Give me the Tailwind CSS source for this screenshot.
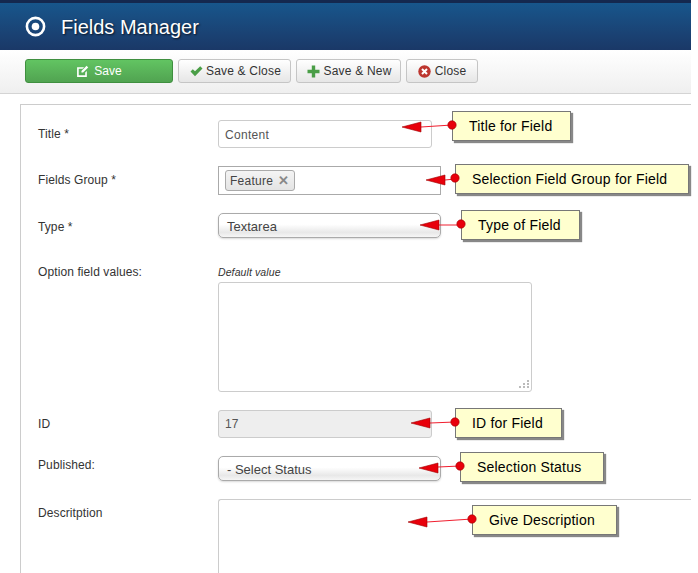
<!DOCTYPE html>
<html lang="en">
<head>
    <meta charset="UTF-8">
    <title>Fields Manager</title>
    <script src="https://cdn.jsdelivr.net/npm/@tailwindcss/browser@4"></script>
</head>
<body class="bg-white font-['Liberation_Sans',Arial,sans-serif] text-[12px] tracking-[0.1px] text-[#333]">
<div class="relative w-[698px] h-[573px] overflow-hidden">
    <div class="w-[691px]">
        <!-- Header -->
        <div class="h-[50px] border-t-[3px] border-[#14284f] bg-gradient-to-b from-[#17568c] to-[#1a3867] flex items-center pl-[25px] gap-[15px]">
            <svg class="w-[21px] h-[21px]" viewBox="0 0 21 21"><circle cx="10.5" cy="10.5" r="8.6" fill="none" stroke="#fff" stroke-width="2.6"/><circle cx="10.5" cy="10.5" r="3.8" fill="#fff"/></svg>
            <h1 class="text-[20px] tracking-normal text-white [text-shadow:1px_1px_2px_rgba(0,0,0,.7)]">Fields Manager</h1>
        </div>

        <!-- Toolbar -->
        <div class="h-[44px] bg-gradient-to-b from-white to-[#efefef] border-b border-[#d4d4d4] flex items-start pt-[9px] pl-[25px] gap-[5px]">
            <button class="w-[148px] h-[24px] rounded-[3px] border border-[#3f8f3f] bg-gradient-to-b from-[#62c462] to-[#51a351] text-white flex items-center justify-center gap-[5px] tracking-normal">
                <svg class="w-[13px] h-[13px]" viewBox="0 0 12 12"><path d="M1 2h6.500L6 3.500H2.500v6h6V7L10 5.500V11H1z" fill="#fff"/><path d="M5 5.500 9.800.7l1.500 1.500L6.500 7H5z" fill="#fff"/></svg>
                Save
            </button>
            <button class="w-[113px] h-[24px] pl-[2px] rounded-[3px] border border-[#c5c5c5] bg-gradient-to-b from-white to-[#e6e6e6] flex items-center justify-center gap-[3px] tracking-[0.2px]">
                <svg class="w-[13px] h-[11px]" viewBox="0 0 13 11"><path d="M.5 5.500 2.800 3.200 5 5.300 10.200.3l2.300 2.300L5 10.200z" fill="#4a9e47"/></svg>
                Save &amp; Close
            </button>
            <button class="w-[105px] h-[24px] pl-[2px] rounded-[3px] border border-[#c5c5c5] bg-gradient-to-b from-white to-[#e6e6e6] flex items-center justify-center gap-[3px] tracking-[0.2px]">
                <svg class="w-[13px] h-[13px]" viewBox="0 0 13 13"><path d="M4.800.5h3.400v4.300h4.300v3.400H8.200v4.300H4.800V8.200H.5V4.800h4.300z" fill="#4a9e47"/></svg>
                Save &amp; New
            </button>
            <button class="w-[72px] h-[24px] rounded-[3px] border border-[#c5c5c5] bg-gradient-to-b from-white to-[#e6e6e6] flex items-center justify-center gap-[4px] tracking-[0.2px]">
                <svg class="w-[13px] h-[13px]" viewBox="0 0 13 13"><circle cx="6.500" cy="6.500" r="6.200" fill="#bd362f"/><path d="M4 4l5 5M9 4l-5 5" stroke="#fff" stroke-width="2"/></svg>
                Close
            </button>
        </div>

        <!-- Form -->
        <div class="ml-[20px] mt-[10px] border border-[#ccc] border-r-0 h-[480px] pt-[15px] pl-[17px]">
            <div class="flex h-[28px] mb-[18px]">
                <label class="w-[180px] pt-[5px]">Title *</label>
                <div class="w-[214px] h-[28px] border border-[#ccc] rounded-[3px] px-[6px] pt-[1px] flex items-center text-[#555] tracking-[0.3px]">Content</div>
            </div>
            <div class="flex h-[29px] mb-[18px]">
                <label class="w-[180px] pt-[5px]">Fields Group *</label>
                <div class="w-[223px] h-[29px] border border-[#aaa] flex items-center pl-[6px]">
                    <span class="h-[21px] pl-[4px] pr-[5px] rounded-[3px] border border-[#aaa] bg-gradient-to-b from-[#f4f4f4] to-[#e4e4e4] flex items-center gap-[5px] text-[#444] tracking-[0.25px]">Feature <span class="text-[#888] font-bold text-[13px]">✕</span></span>
                </div>
            </div>
            <div class="flex h-[25px] mb-[28px]">
                <label class="w-[180px] pt-[5px]">Type *</label>
                <div class="w-[223px] h-[25px] border border-[#aaa] rounded-[5px] bg-[linear-gradient(#fff_45%,#e8e8e8_80%,#f6f6f6)] px-[8px] pt-[2px] flex items-center text-[13px] tracking-normal text-[#444] shadow-[0_1px_2px_rgba(0,0,0,.15)]">Textarea</div>
            </div>
            <div class="flex h-[126px] mb-[18px]">
                <label class="w-[180px] leading-[12px]">Option field values:</label>
                <div>
                    <div class="h-[13px] text-[10.500px] italic leading-[13px] mb-[3px]">Default value</div>
                    <div class="relative w-[314px] h-[110px] border border-[#ccc] rounded-[3px]">
                        <svg class="absolute right-[1px] bottom-[1px] w-[11px] h-[11px]" viewBox="0 0 11 11" fill="#bbb"><path d="M8 1h2v2H8zM8 4h2v2H8zM4 4h2v2H4zM8 7h2v2H8zM4 7h2v2H4zM0 7h2v2H0z"/></svg>
                    </div>
                </div>
            </div>
            <div class="flex h-[28px] mb-[18px]">
                <label class="w-[180px] pt-[5px]">ID</label>
                <div class="w-[214px] h-[28px] border border-[#ccc] rounded-[3px] bg-[#eee] px-[6px] flex items-center text-[#555]">17</div>
            </div>
            <div class="flex h-[25px] mb-[18px]">
                <label class="w-[180px]">Published:</label>
                <div class="w-[223px] h-[25px] border border-[#aaa] rounded-[5px] bg-[linear-gradient(#fff_45%,#e8e8e8_80%,#f6f6f6)] px-[8px] pt-[2px] flex items-center text-[13px] tracking-normal text-[#444] shadow-[0_1px_2px_rgba(0,0,0,.15)]">- Select Status</div>
            </div>
            <div class="flex">
                <label class="w-[180px] pt-[5px]">Descritption</label>
                <div class="flex-1 h-[120px] border border-[#ccc] border-r-0 rounded-tl-[3px]"></div>
            </div>
        </div>
    </div>

    <!-- Annotation notes -->
    <div class="absolute left-[452px] top-[111px] w-[119px] h-[30px] pl-[16px] bg-[#ffffcf] border border-[#777] shadow-[2px_2px_1px_#888] text-[14px] tracking-[0.2px] text-black flex items-center">Title for Field</div>
    <div class="absolute left-[455px] top-[164px] w-[234px] h-[30px] pl-[16px] bg-[#ffffcf] border border-[#777] shadow-[2px_2px_1px_#888] text-[14px] tracking-[0.2px] text-black flex items-center">Selection Field Group for Field</div>
    <div class="absolute left-[461px] top-[210px] w-[119px] h-[30px] pl-[16px] bg-[#ffffcf] border border-[#777] shadow-[2px_2px_1px_#888] text-[14px] tracking-[0.2px] text-black flex items-center">Type of Field</div>
    <div class="absolute left-[455px] top-[408px] w-[107px] h-[30px] pl-[16px] bg-[#ffffcf] border border-[#777] shadow-[2px_2px_1px_#888] text-[14px] tracking-[0.2px] text-black flex items-center">ID for Field</div>
    <div class="absolute left-[460px] top-[452px] w-[144px] h-[30px] pl-[16px] bg-[#ffffcf] border border-[#777] shadow-[2px_2px_1px_#888] text-[14px] tracking-[0.2px] text-black flex items-center">Selection Status</div>
    <div class="absolute left-[472px] top-[505px] w-[145px] h-[30px] pl-[16px] bg-[#ffffcf] border border-[#777] shadow-[2px_2px_1px_#888] text-[14px] tracking-[0.2px] text-black flex items-center">Give Description</div>

    <!-- Annotation arrows, drawn over the notes -->
    <svg class="absolute inset-0 w-[698px] h-[573px]" viewBox="0 0 698 573">
        <g stroke="#f02030" stroke-width="1.200">
            <path d="M421 127 452 125M445 180 455 179M439 225 461 225M430 423 455 422M438 467 460 466M427 522 472 519"/>
        </g>
        <g fill="#e8000b" stroke="#a00000" stroke-width="0.6">
            <path d="M402 127 421 122V132z"/><path d="M426 180 445 175V185z"/><path d="M420 225 439 220V230z"/>
            <path d="M411 423 430 418V428z"/><path d="M419 468 438 463V473z"/><path d="M408 522 427 517V527z"/>
            <circle cx="452" cy="125" r="4.200"/><circle cx="455" cy="178" r="4.200"/><circle cx="461" cy="224" r="4.200"/>
            <circle cx="455" cy="422" r="4.200"/><circle cx="460" cy="466" r="4.200"/><circle cx="472" cy="519" r="4.200"/>
        </g>
    </svg>
</div>
</body>
</html>
